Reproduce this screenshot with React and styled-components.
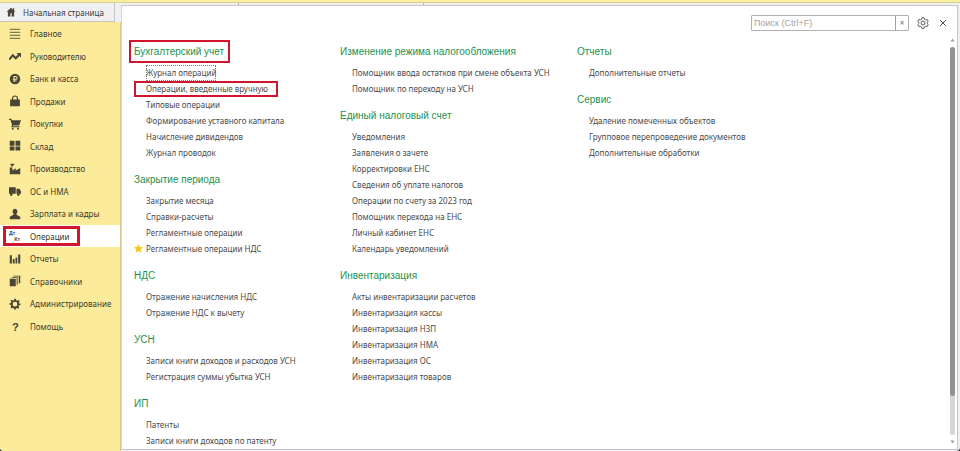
import styled, { createGlobalStyle, css } from 'styled-components'

const GlobalStyle = createGlobalStyle`
  * {
    box-sizing: border-box;
  }
  body {
    margin: 0;
    background: #33332f;
    font-family: "Noto Sans", "Liberation Sans", Arial, sans-serif;
    font-size: 8px;
    color: #4a4a4a;
  }
`;

/* red frame round the text it is put on */
const marked = css`
  position: relative;

  &::after {
    content: "";
    position: absolute;
    inset: ${props => props.$frame};
    border: ${props => props.$frameWidth || 2}px solid #d2142e;
    pointer-events: none;
  }
`;

const Window = styled.div`
  display: flex;
  flex-direction: column;
  height: 100vh;
  overflow: hidden;
  border-radius: 0 0 4px 4px;
  background: #f0eff2;
`;

const TitleStrip = styled.div`
  flex: none;
  height: 3px;
  background: #f9ee9b;
  border-bottom: 1px solid #d9cf98;
`;

const Body = styled.div`
  flex: 1;
  display: flex;
  min-height: 0;
`;

const Side = styled.div`
  flex: none;
  display: flex;
  flex-direction: column;
  width: 121px;
`;

const HomeTab = styled.button`
  display: flex;
  align-items: center;
  gap: 7px;
  height: 19px;
  padding: 0 0 0 6px;
  border: none;
  border-right: 1px solid #c4c3c8;
  border-bottom: 1px solid #c9c5b4;
  margin-right: 6px;
  background: #f0eff2;
  font: inherit;
  color: #3c3c3c;
  white-space: nowrap;
`;

const SideNav = styled.nav`
  flex: 1;
  background: #fbeb9b;
  border-right: 1px solid #d5c98d;
`;

const SideList = styled.ul`
  list-style: none;
  margin: 0;
  padding: 0;
`;

const SideItem = styled.li`
  height: 23px;

  &:nth-child(even) {
    height: 22px;
  }
`;

const SideLink = styled.a`
  display: flex;
  align-items: center;
  gap: 9px;
  height: 100%;
  padding-left: 9px;
  color: #3d3a2c;
  text-decoration: none;
  white-space: nowrap;
  background: ${props => (props.$active ? '#ffffff' : 'transparent')};
  ${props => props.$frame && marked}
`;

const Icon = styled.svg`
  flex: none;
  width: ${props => props.$size || 12}px;
  height: ${props => props.$size || 12}px;
  fill: ${props => (props.$line ? 'none' : '#4a4536')};
  stroke: ${props => (props.$line ? '#4a4a4a' : 'none')};
`;

const Main = styled.div`
  flex: 1;
  display: flex;
  flex-direction: column;
  min-width: 0;
  padding: 0 2px 1px 0;
`;

const TabStrip = styled.div`
  flex: none;
  display: flex;
  height: 2px;
`;

const TabEdge = styled.div`
  width: ${props => props.$width}px;
  border-right: 1px solid #b5b3ba;
`;

const Panel = styled.main`
  flex: 1;
  display: flex;
  flex-direction: column;
  min-height: 0;
  background: #ffffff;
  border: 1px solid #c8c3cd;
  border-left-color: #d6d4d4;
`;

const Toolbar = styled.div`
  flex: none;
  display: flex;
  justify-content: flex-end;
  align-items: center;
  gap: 7px;
  padding: 9px 8px 2px;
`;

const SearchBox = styled.div`
  display: flex;
  width: 158px;
  height: 16px;
  border: 1px solid #b2b2b2;
  border-radius: 1px;
`;

const SearchInput = styled.input`
  flex: 1;
  min-width: 0;
  padding: 0 2px;
  border: none;
  outline: none;
  font-family: "Liberation Sans", Arial, sans-serif;
  font-size: 9px;

  &::placeholder {
    color: #a3a3a3;
  }
`;

const ClearButton = styled.button`
  width: 13px;
  padding: 0;
  border: none;
  border-left: 1px solid #a0a0a0;
  background: none;
  font: inherit;
  line-height: 12px;
  color: #666666;
`;

const IconButton = styled.button`
  display: flex;
  align-items: center;
  justify-content: center;
  width: 13px;
  height: 16px;
  padding: 0;
  border: none;
  background: none;
`;

const Content = styled.div`
  flex: 1;
  display: flex;
  min-height: 0;
`;

const Columns = styled.div`
  flex: 1;
  display: grid;
  grid-template-columns: 206fr 237fr 371fr;
  padding: 11px 0 0 12px;
  overflow: hidden;
`;

const Section = styled.section`
  margin-bottom: 11px;
`;

const SectionTitle = styled.h2`
  width: max-content;
  margin: 0 0 5px;
  font-family: "Liberation Sans", Arial, sans-serif;
  font-size: 10px;
  font-weight: normal;
  line-height: 16px;
  color: #1d9150;
  ${props => props.$frame && marked}
`;

const CommandList = styled.ul`
  list-style: none;
  margin: 0;
  padding: 0 0 0 12px;
`;

const Command = styled.li`
  position: relative;
  line-height: 16px;
  white-space: nowrap;
`;

const CommandLink = styled.a`
  display: block;
  width: max-content;
  color: #4a4a4a;
  text-decoration: none;
  outline: ${props => (props.$focused ? '1px dotted #7a7a7a' : 'none')};
  outline-offset: -1px;
  ${props => props.$frame && marked}
`;

const Star = styled.svg`
  position: absolute;
  left: -12px;
  top: 3px;
  width: 9px;
  height: 9px;
  fill: #f2c81e;
`;

const Scrollbar = styled.div`
  flex: none;
  display: flex;
  flex-direction: column;
  align-items: center;
  gap: 5px;
  width: 9px;
  padding: 5px 0;
`;

const Arrow = styled.svg`
  width: 5px;
  height: 4px;
  fill: #9a9a9a;
`;

const Track = styled.div`
  flex: 1;
  width: 5px;
  border-radius: 3px;
  background: #d6d6d6;
`;

const Thumb = styled.div`
  height: 90%;
  border-radius: 3px;
  background: #929292;
`;

const icons = {
  home: <path d="M8 1 1 7.500h2V15h4v-5h2v5h4V7.500h2L13 5.600V2h-2v1.800z" />,
  main: <path fill="#857a50" d="M1 1h14v1.500H1zM1 5h14v1.500H1zM1 9h14v1.500H1zM1 13h14v1.500H1z" />,
  trend: <path d="M0 11 5 5l4 4 3-3-2-2h6v6l-2-2-5 5-4-4-3 4H0z" />,
  ruble: <path fillRule="evenodd" d="M8 1a7 7 0 1 1 0 14A7 7 0 0 1 8 1zM6 4v4H5v1h1v3h1.500v-1H10v-1H7.500V9H9a2.500 2.500 0 0 0 0-5zm1.500 1.200H9a1.200 1.200 0 0 1 0 2.500H7.500z" />,
  bag: <path fillRule="evenodd" d="M1.500 6H4V4.500a4 4 0 0 1 8 0V6h2.500v9h-13zm4 0h5V4.500a2.500 2.500 0 0 0-5 0z" />,
  cart: <path d="M0 1h3l1 2h12l-2.500 7H5.500l-.5 1h9v1.300H3l1-3L2 2.500H0zM5 13a1.300 1.300 0 1 1 0 2.600A1.300 1.300 0 0 1 5 13zM12 13a1.300 1.300 0 1 1 0 2.600 1.300 1.300 0 0 1 0-2.600z" />,
  store: <path d="M1 1h6.300v6.500H1zM8.700 1H15v6.500H8.700zM1 8.700h6.300V14H1zM8.700 8.700H15V14H8.700z" />,
  factory: <path d="M2 1h5v1.500H5.500v2H3V3H2zM1 6h3.500v4L9 7v3l6-3.500V15H1z" />,
  truck: <path d="M0 3h9v8.500H0zM10 5h4l2 3.500v3h-6zM3 11a1.800 1.800 0 1 1 0 3.600A1.800 1.800 0 0 1 3 11zM12.500 11a1.800 1.800 0 1 1 0 3.600 1.800 1.800 0 0 1 0-3.600z" />,
  person: <path d="M8 1a3.300 3.800 0 0 1 2 6.800V9l5 2.500V15H1v-3.500L6 9V7.800A3.300 3.800 0 0 1 8 1z" />,
  chart: <path d="M1 3h2.800v11H1zM5 8h2.500v6H5zM8.700 6h2.300v8H8.700zM12.200 2H15v12h-2.800z" />,
  books: <path d="M1 5h8v10H1zM3.500 3h8v10h-1.300V4H3.500zM6 1h9v10h-2V2H6z" />,
  gear: <path fillRule="evenodd" d="M7 1h2l.5 2 1.500.7L13 2.500 14.200 4 13 5.700l.5 1.300 1.800.5v1.800l-2 .5-.6 1.400 1 1.800-1.500 1.300-1.700-1-1.500.6-.3 1.600H7l-.5-2-1.500-.6-1.700 1L2 12.500l1-1.800-.5-1.400-2-.5V7.200l2-.5.5-1.300-1-1.700 1.500-1.400 1.500 1.200 1.500-.5zM8 5a3.200 3.200 0 1 0 0 6.400A3.200 3.200 0 0 0 8 5z" />,
  debit: (
    <text fontFamily="Liberation Sans" fontSize="7" fontWeight="bold">
      <tspan x="0" y="7">Дт</tspan>
      <tspan x="7" y="14">Кт</tspan>
    </text>
  ),
  help: <text x="4" y="14" fontFamily="Liberation Sans" fontSize="15" fontWeight="bold">?</text>,
};

const menu = [
  { icon: 'main', label: 'Главное' },
  { icon: 'trend', label: 'Руководителю' },
  { icon: 'ruble', label: 'Банк и касса' },
  { icon: 'bag', label: 'Продажи' },
  { icon: 'cart', label: 'Покупки' },
  { icon: 'store', label: 'Склад' },
  { icon: 'factory', label: 'Производство' },
  { icon: 'truck', label: 'ОС и НМА' },
  { icon: 'person', label: 'Зарплата и кадры' },
  { icon: 'debit', label: 'Операции', active: true, frame: '1px 40px 1px 3px' },
  { icon: 'chart', label: 'Отчеты' },
  { icon: 'books', label: 'Справочники' },
  { icon: 'gear', label: 'Администрирование' },
  { icon: 'help', label: 'Помощь' },
];

const columns = [
  [
    {
      title: 'Бухгалтерский учет',
      frame: '-4px -6px -3px -5px',
      items: [
        { label: 'Журнал операций', focused: true },
        { label: 'Операции, введенные вручную', frame: '0 -10px 0 -12px' },
        { label: 'Типовые операции' },
        { label: 'Формирование уставного капитала' },
        { label: 'Начисление дивидендов' },
        { label: 'Журнал проводок' },
      ],
    },
    {
      title: 'Закрытие периода',
      items: [
        { label: 'Закрытие месяца' },
        { label: 'Справки-расчеты' },
        { label: 'Регламентные операции' },
        { label: 'Регламентные операции НДС', starred: true },
      ],
    },
    {
      title: 'НДС',
      items: [
        { label: 'Отражение начисления НДС' },
        { label: 'Отражение НДС к вычету' },
      ],
    },
    {
      title: 'УСН',
      items: [
        { label: 'Записи книги доходов и расходов УСН' },
        { label: 'Регистрация суммы убытка УСН' },
      ],
    },
    {
      title: 'ИП',
      items: [
        { label: 'Патенты' },
        { label: 'Записи книги доходов по патенту' },
      ],
    },
  ],
  [
    {
      title: 'Изменение режима налогообложения',
      items: [
        { label: 'Помощник ввода остатков при смене объекта УСН' },
        { label: 'Помощник по переходу на УСН' },
      ],
    },
    {
      title: 'Единый налоговый счет',
      items: [
        { label: 'Уведомления' },
        { label: 'Заявления о зачете' },
        { label: 'Корректировки ЕНС' },
        { label: 'Сведения об уплате налогов' },
        { label: 'Операции по счету за 2023 год' },
        { label: 'Помощник перехода на ЕНС' },
        { label: 'Личный кабинет ЕНС' },
        { label: 'Календарь уведомлений' },
      ],
    },
    {
      title: 'Инвентаризация',
      items: [
        { label: 'Акты инвентаризации расчетов' },
        { label: 'Инвентаризация кассы' },
        { label: 'Инвентаризация НЗП' },
        { label: 'Инвентаризация НМА' },
        { label: 'Инвентаризация ОС' },
        { label: 'Инвентаризация товаров' },
      ],
    },
  ],
  [
    {
      title: 'Отчеты',
      items: [{ label: 'Дополнительные отчеты' }],
    },
    {
      title: 'Сервис',
      items: [
        { label: 'Удаление помеченных объектов' },
        { label: 'Групповое перепроведение документов' },
        { label: 'Дополнительные обработки' },
      ],
    },
  ],
];

function App() {
  return (
    <Window>
      <GlobalStyle />
      <TitleStrip />
      <Body>
        <Side>
          <HomeTab>
            <Icon viewBox="0 0 16 16" $size={10}>{icons.home}</Icon>
            Начальная страница
          </HomeTab>
          <SideNav>
            <SideList>
              {menu.map(item => (
                <SideItem key={item.label}>
                  <SideLink href="#" $active={item.active} $frame={item.frame} $frameWidth={3}>
                    <Icon viewBox="0 0 16 16">{icons[item.icon]}</Icon>
                    {item.label}
                  </SideLink>
                </SideItem>
              ))}
            </SideList>
          </SideNav>
        </Side>

        <Main>
          <TabStrip>
            <TabEdge $width={118} />
            <TabEdge $width={185} />
          </TabStrip>
          <Panel>
            <Toolbar>
              <SearchBox>
                <SearchInput type="text" placeholder="Поиск (Ctrl+F)" aria-label="Поиск" />
                <ClearButton aria-label="Очистить">×</ClearButton>
              </SearchBox>
              <IconButton aria-label="Настройки">
                <Icon viewBox="0 0 16 16" $size={12} $line>
                  <path strokeWidth="1.2" strokeLinejoin="round" d="M6.500 1h3l.5 2 1.500.9 2-.6 1.500 2.600-1.500 1.300v1.600l1.500 1.400-1.500 2.600-2-.6-1.500.9-.5 2h-3l-.5-2-1.500-.9-2 .6L1 10.200l1.500-1.400V7.200L1 5.900l1.500-2.600 2 .6L6 3z" />
                  <circle cx="8" cy="8" r="2.600" strokeWidth="1.2" />
                </Icon>
              </IconButton>
              <IconButton aria-label="Закрыть">
                <Icon viewBox="0 0 16 16" $size={8} $line>
                  <path strokeWidth="2" d="M2 2l12 12M14 2 2 14" />
                </Icon>
              </IconButton>
            </Toolbar>

            <Content>
              <Columns>
                {columns.map((sections, i) => (
                  <div key={i}>
                    {sections.map(section => (
                      <Section key={section.title}>
                        <SectionTitle $frame={section.frame}>{section.title}</SectionTitle>
                        <CommandList>
                          {section.items.map(item => (
                            <Command key={item.label}>
                              {item.starred && (
                                <Star viewBox="0 0 16 16">
                                  <path d="M8 0l2.400 5.300 5.600.6-4.200 3.800L13 15.500 8 12.600 3 15.500l1.200-5.800L0 5.900l5.600-.6z" />
                                </Star>
                              )}
                              <CommandLink href="#" $focused={item.focused} $frame={item.frame}>
                                {item.label}
                              </CommandLink>
                            </Command>
                          ))}
                        </CommandList>
                      </Section>
                    ))}
                  </div>
                ))}
              </Columns>
              <Scrollbar>
                <Arrow viewBox="0 0 10 8"><path d="M5 1l4 6H1z" /></Arrow>
                <Track>
                  <Thumb />
                </Track>
                <Arrow viewBox="0 0 10 8"><path d="M5 7 1 1h8z" /></Arrow>
              </Scrollbar>
            </Content>
          </Panel>
        </Main>
      </Body>
    </Window>
  );
}

export default App;
